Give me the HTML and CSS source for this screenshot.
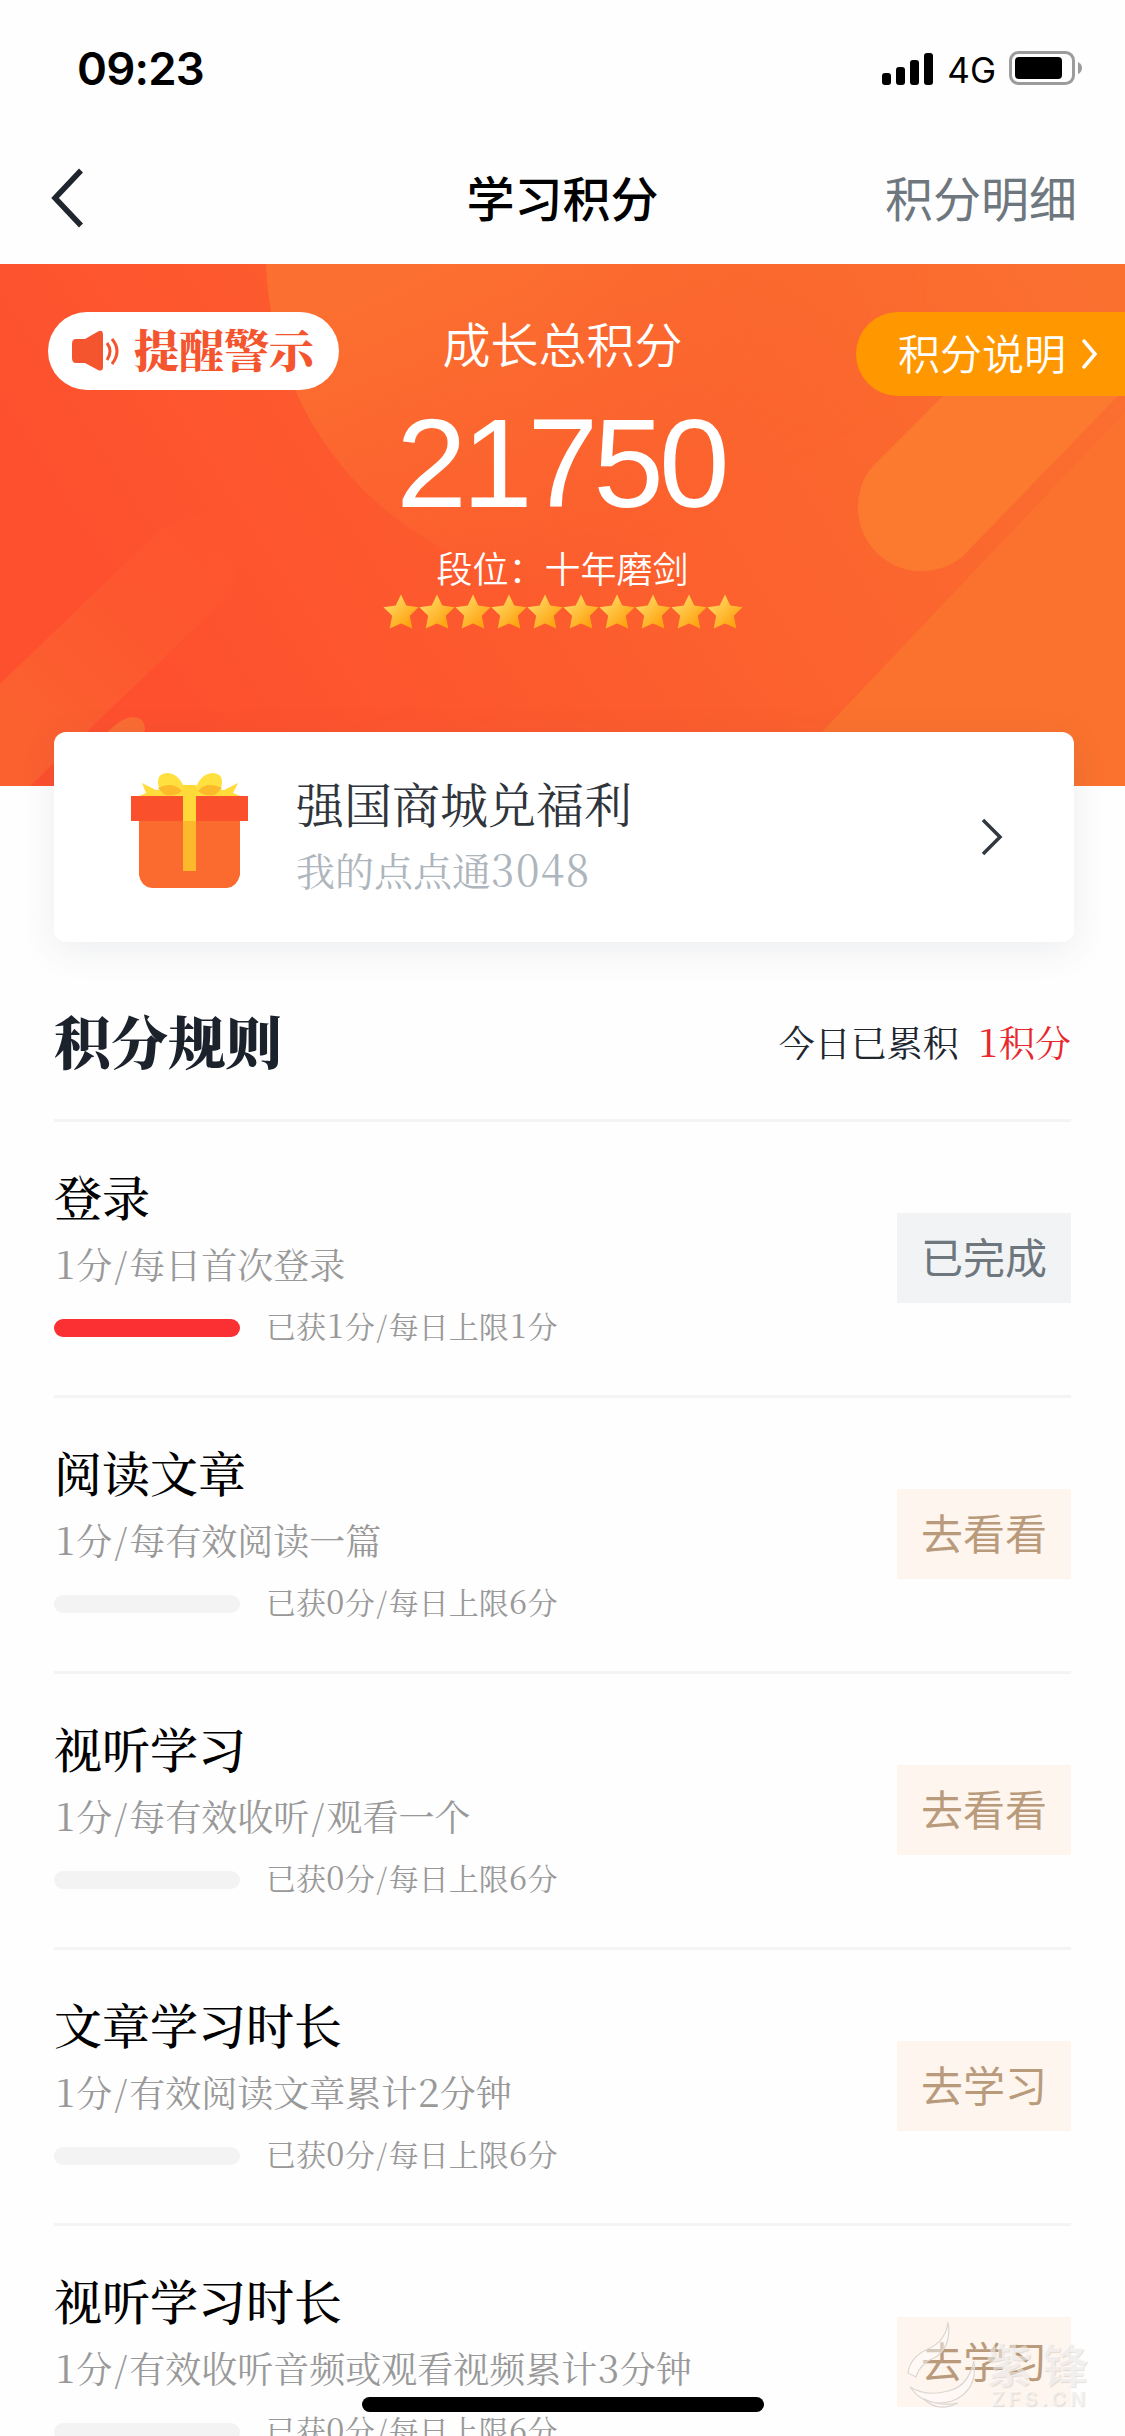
FILE: index.html
```html
<!DOCTYPE html>
<html lang="zh-CN">
<head>
<meta charset="utf-8">
<title>学习积分</title>
<link rel="stylesheet" href="styles.css">
</head>
<body>
<svg class="defs" aria-hidden="true">
  <defs>
    <linearGradient id="gold" x1="0" y1="0" x2="1" y2="1">
      <stop offset="0.2" stop-color="#ffd45c"/><stop offset="0.8" stop-color="#ffa412"/>
    </linearGradient>
    <symbol id="star" viewBox="0 0 36 36"><path fill="url(#gold)" d="M18 0.5 23.3 11.5 35.6 13.2 26.8 21.8 29.3 34.5 18 29.5 6.7 34.5 9.2 21.8 0.4 13.2 12.7 11.5z"/></symbol>
  </defs>
</svg>
<div class="phone">
  <header class="status">
    <span class="time">09:23</span>
    <span class="signals">
      <svg width="52" height="34" viewBox="0 0 52 34"><rect x="0" y="21" width="9" height="12" rx="3"/><rect x="14" y="15" width="9" height="18" rx="3"/><rect x="28" y="8" width="9" height="25" rx="3"/><rect x="42" y="1" width="9" height="32" rx="3"/></svg>
      <span class="net">4G</span>
      <svg class="battery" width="74" height="36" viewBox="0 0 74 36"><rect x="1.5" y="1.5" width="63" height="31" rx="8" fill="none" stroke="#9c9c9c" stroke-width="3"/><rect x="6" y="6" width="47" height="22" rx="4"/><path d="M69 11q4 2 4 6t-4 6z" fill="#9c9c9c"/></svg>
    </span>
  </header>
  <nav class="nav">
    <svg class="back" width="34" height="60" viewBox="0 0 34 60"><path d="M31 2.500 5 30 31 57.500" fill="none" stroke="#20262e" stroke-width="5.500"/></svg>
    <h1>学习积分</h1>
    <a class="detail">积分明细</a>
  </nav>

  <section class="hero">
    <svg class="hero-art" width="1125" height="522" viewBox="0 0 1125 522">
      <defs>
        <linearGradient id="bg" x1="0" y1="0.3" x2="1" y2="0"><stop offset="0" stop-color="#fe502e"/><stop offset="0.5" stop-color="#fc612e"/><stop offset="1" stop-color="#fa712f"/></linearGradient>
        <linearGradient id="disc" gradientUnits="userSpaceOnUse" x1="380" y1="0" x2="560" y2="330"><stop offset="0" stop-color="#fb7030"/><stop offset="1" stop-color="#fb7030" stop-opacity="0"/></linearGradient>
        <linearGradient id="beam" gradientUnits="userSpaceOnUse" x1="220" y1="250" x2="0" y2="470"><stop offset="0" stop-color="#fb6430" stop-opacity="0"/><stop offset="0.9" stop-color="#fb6430" stop-opacity="0.8"/></linearGradient>
        <linearGradient id="sweep" gradientUnits="userSpaceOnUse" x1="520" y1="0" x2="930" y2="0"><stop offset="0" stop-color="#fff"/><stop offset="1" stop-color="#000"/></linearGradient>
        <mask id="fade"><rect width="1125" height="522" fill="url(#sweep)"/></mask>
      </defs>
      <rect width="1125" height="522" fill="url(#bg)"/>
      <circle cx="600" cy="-10" r="334" fill="url(#disc)" mask="url(#fade)"/>
      <path d="M0 420 160 266Q200 236 232 268 248 302 222 338L30 522H0z" fill="url(#beam)"/>
      <path d="M106 470Q128 446 142 456 148 466 142 470z" fill="#fb6c33"/>
      <path d="M1125 148 820 470V522H1125z" fill="#fa722e"/>
      <path d="M943 132 872 203A64 64 0 0 0 962 293L1088 163 1118 132z" fill="#fc7930"/>
    </svg>
    <a class="alert">
      <svg width="50" height="42" viewBox="0 0 50 42"><path d="M5 9H14L27 1.500Q32-1 32 5V37Q32 42 27 40L14 33H5Q1 33 1 28V14Q1 9 5 9z" fill="#f4552f"/><path d="M36 13q6 8 0 17M41 9q10 12 0 25" fill="none" stroke="#f4552f" stroke-width="3"/></svg>
      <span>提醒警示</span>
    </a>
    <div class="score">
      <p class="label">成长总积分</p>
      <p class="total">21750</p>
      <p class="rank">段位：十年磨剑</p>
      <div class="stars">
        <svg><use href="#star"/></svg><svg><use href="#star"/></svg><svg><use href="#star"/></svg><svg><use href="#star"/></svg><svg><use href="#star"/></svg><svg><use href="#star"/></svg><svg><use href="#star"/></svg><svg><use href="#star"/></svg><svg><use href="#star"/></svg><svg><use href="#star"/></svg>
      </div>
    </div>
    <a class="explain"><span>积分说明</span><svg width="16" height="30" viewBox="0 0 16 30"><path d="M2 2 13 15 2 28" fill="none" stroke="#fff" stroke-width="3.500" stroke-linecap="round"/></svg></a>
  </section>

  <section class="shop">
    <svg class="gift" width="118" height="116" viewBox="0 0 118 116">
      <path d="M11 10 25 17 48 14H70L93 17 107 10 102 20 112 24H6L15 20z" fill="#ffdb3c"/>
      <path d="M8 48H109V102Q106 114 96 115H21Q10 114 8 102z" fill="#fb6a2e"/>
      <path d="M0 23H117V48H0z" fill="#fb502c"/>
      <path d="M28 15Q24 1 36 0 47 0 53 14L48 23H34zM90 15Q94 1 82 0 71 0 65 14L70 23H84z" fill="#ffe03e"/>
      <path d="M27 15Q42 8 51 18 44 24 34 22zM91 15Q76 8 67 18 74 24 84 22z" fill="#fdb92c"/>
      <path d="M52 12H65V48H52z" fill="#ffd938"/><path d="M52 48H65V98H52z" fill="#fdb92c"/>
    </svg>
    <div class="shop-text">
      <h2>强国商城兑福利</h2>
      <p>我的点点通<span class="num wide">3048</span></p>
    </div>
    <svg class="go" width="22" height="38" viewBox="0 0 22 38"><path d="M2 2 19 19 2 36" fill="none" stroke="#333940" stroke-width="3.500"/></svg>
  </section>

  <main class="rules">
    <div class="rules-head">
      <h2>积分规则</h2>
      <p>今日已累积<em><b class="num">1</b>积分</em></p>
    </div>
    <article class="rule">
      <div><h3>登录</h3><p class="desc"><b class="num">1</b>分<i>/</i>每日首次登录</p>
        <div class="progress"><span class="bar full"></span><span class="count">已获<b class="num">1</b>分<i>/</i>每日上限<b class="num">1</b>分</span></div></div>
      <a class="btn done">已完成</a>
    </article>
    <article class="rule">
      <div><h3>阅读文章</h3><p class="desc"><b class="num">1</b>分<i>/</i>每有效阅读一篇</p>
        <div class="progress"><span class="bar"></span><span class="count">已获<b class="num">0</b>分<i>/</i>每日上限<b class="num">6</b>分</span></div></div>
      <a class="btn">去看看</a>
    </article>
    <article class="rule">
      <div><h3>视听学习</h3><p class="desc"><b class="num">1</b>分<i>/</i>每有效收听<i>/</i>观看一个</p>
        <div class="progress"><span class="bar"></span><span class="count">已获<b class="num">0</b>分<i>/</i>每日上限<b class="num">6</b>分</span></div></div>
      <a class="btn">去看看</a>
    </article>
    <article class="rule">
      <div><h3>文章学习时长</h3><p class="desc"><b class="num">1</b>分<i>/</i>有效阅读文章累计<b class="num">2</b>分钟</p>
        <div class="progress"><span class="bar"></span><span class="count">已获<b class="num">0</b>分<i>/</i>每日上限<b class="num">6</b>分</span></div></div>
      <a class="btn">去学习</a>
    </article>
    <article class="rule">
      <div><h3>视听学习时长</h3><p class="desc"><b class="num">1</b>分<i>/</i>有效收听音频或观看视频累计<b class="num">3</b>分钟</p>
        <div class="progress"><span class="bar"></span><span class="count">已获<b class="num">0</b>分<i>/</i>每日上限<b class="num">6</b>分</span></div></div>
      <a class="btn">去学习</a>
    </article>
  </main>

  <div class="home-bar"></div>
  <div class="watermark">
    <svg width="80" height="90" viewBox="0 0 80 90"><g fill="#fff" fill-opacity="0.45" stroke="#ddd6d0" stroke-width="1.200"><path d="M42 1Q40 20 22 28 4 36 2 52L10 56Q14 42 30 36 46 24 42 1z"/><path d="M4 66Q20 88 46 80 72 70 68 40 62 66 42 70 20 76 4 66z"/><path d="M18 78Q32 92 52 82 36 86 18 78z"/></g></svg>
    <div><span class="wm-name">紫锋</span><span class="wm-site">ZFS.CN</span></div>
  </div>
</div>
</body>
</html>
```
FILE: styles.css
```css
* { box-sizing: border-box; margin: 0; padding: 0; }
body { width: 1125px; background: #fefefe; font-family: "Noto Sans CJK SC", sans-serif; }
h1, h2, h3, p { line-height: 1; }
svg { display: block; flex: none; }
.defs { position: absolute; width: 0; height: 0; }
.phone { position: relative; width: 1125px; height: 2436px; overflow: hidden; }

.status { height: 136px; display: flex; align-items: center; justify-content: space-between; padding: 2px 42px 0 77px; }
.time { font: 600 45.500px/1 Inter, sans-serif; letter-spacing: -0.8px; }
.signals { display: flex; align-items: center; }
.net { font: 400 35px/1 Inter, sans-serif; margin: 2px 13px 0 13px; }

.nav { height: 128px; display: grid; grid-template-columns: 1fr auto 1fr; align-items: center; padding: 0 48px 4px 50px; }
.nav h1 { font-size: 48px; font-weight: 500; margin: -4px 2px 0 0; }
.detail { justify-self: end; font-size: 48px; line-height: 1; color: #6f777e; margin-top: -4px; }

.hero { position: relative; height: 522px; display: grid; grid-template-columns: 291px 1fr 269px; align-items: start; padding: 48px 0 0 48px; color: #fff; }
.hero-art { position: absolute; inset: 0; }
.alert, .score, .explain { position: relative; }
.alert { height: 78px; border-radius: 39px; background: #fff; color: #f4552f; display: flex; align-items: center; padding-left: 23px; gap: 13px; font-family: "Noto Serif CJK SC", "Noto Sans CJK SC", serif; font-weight: 900; font-size: 45px; line-height: 1; }
.alert span { margin-top: -5px; }
.score { display: flex; flex-direction: column; align-items: center; padding: 6px 70px 0 0; }
.label { font-size: 48px; font-weight: 350; }
.total { font: 127px/1 "Liberation Sans", sans-serif; letter-spacing: -4.9px; margin: 34px 0 0 -4px; }
.rank { font-size: 36px; font-weight: 350; margin-top: 22px; white-space: nowrap; }
.stars { display: flex; margin-top: 9px; }
.stars svg { width: 36px; height: 36px; }
.explain { height: 84px; border-radius: 42px 0 0 42px; background: #ff9800; display: flex; align-items: center; padding-left: 42px; gap: 16px; font-size: 42px; font-weight: 350; line-height: 1; }
.explain span { margin-top: -4px; }

.shop { position: relative; margin: -54px 51px 0 54px; height: 210px; border-radius: 12px; background: #fff; box-shadow: 0 8px 36px rgba(60, 70, 90, 0.09); display: flex; align-items: center; padding: 0 71px 0 77px; }
.gift { margin-top: -12px; }
.shop-text { flex: 1; margin: -6px 0 0 47px; font-family: "Noto Serif CJK SC", "Noto Sans CJK SC", serif; }
.shop-text h2 { font-size: 48px; font-weight: 400; color: #30353c; }
.shop-text p { font-size: 39px; font-weight: 400; color: #adb5bd; margin-top: 23px; }

.num { display: inline-block; width: 0.575em; font-size: 1.08em; font-weight: 400; line-height: 0; text-align: center; }
.num.wide { width: auto; letter-spacing: 0.035em; }
.rule i { font-style: normal; padding: 0 0.06em; }

.rules { margin: 0 54px; font-family: "Noto Serif CJK SC", "Noto Sans CJK SC", serif; }
.rules-head { height: 177px; display: flex; align-items: center; justify-content: space-between; padding-top: 17px; }
.rules-head h2 { font-size: 57px; font-weight: 900; color: #1b222b; }
.rules-head p { font-size: 36px; font-weight: 400; color: #20262e; padding-top: 5px; }
.rules-head em { font-style: normal; color: #e8282c; margin-left: 18px; }
.rule { height: 276px; border-top: 3px solid #f4f4f4; display: flex; justify-content: space-between; padding-top: 50px; }
.rule h3 { font-size: 48px; font-weight: 500; color: #000; }
.desc { height: 36px; font-size: 36px; font-weight: 400; color: #999; margin-top: 26px; }
.progress { display: flex; align-items: center; gap: 26px; margin-top: 34px; font-size: 30px; font-weight: 400; line-height: 30px; color: #999; }
.count { height: 30px; margin: -6px 0 0; }
.bar { width: 186px; height: 18px; border-radius: 9px; background: #f3f3f3; }
.bar.full { background: #fb3033; }
.btn { width: 174px; height: 90px; margin-top: 41px; background: #fdf5ee; color: #b99b7c; font: 400 42px/86px "Noto Sans CJK SC", sans-serif; text-align: center; }
.btn.done { background: #f1f3f5; color: #6f777e; }

.home-bar { position: absolute; left: 362px; top: 2397px; width: 402px; height: 15px; border-radius: 8px; background: #000; }
.watermark { position: absolute; left: 906px; top: 2321px; display: flex; color: rgba(255, 255, 255, 0.5); text-shadow: 1px 1px 1px rgba(150, 140, 130, 0.25); }
.watermark div { margin-top: 18px; }
.watermark span { display: block; line-height: 1; }
.wm-name { font-size: 46px; font-weight: 700; letter-spacing: 10px; }
.wm-site { font: 700 20px/1 Inter, sans-serif; letter-spacing: 4px; margin: 4px 0 0 5px; }
```
